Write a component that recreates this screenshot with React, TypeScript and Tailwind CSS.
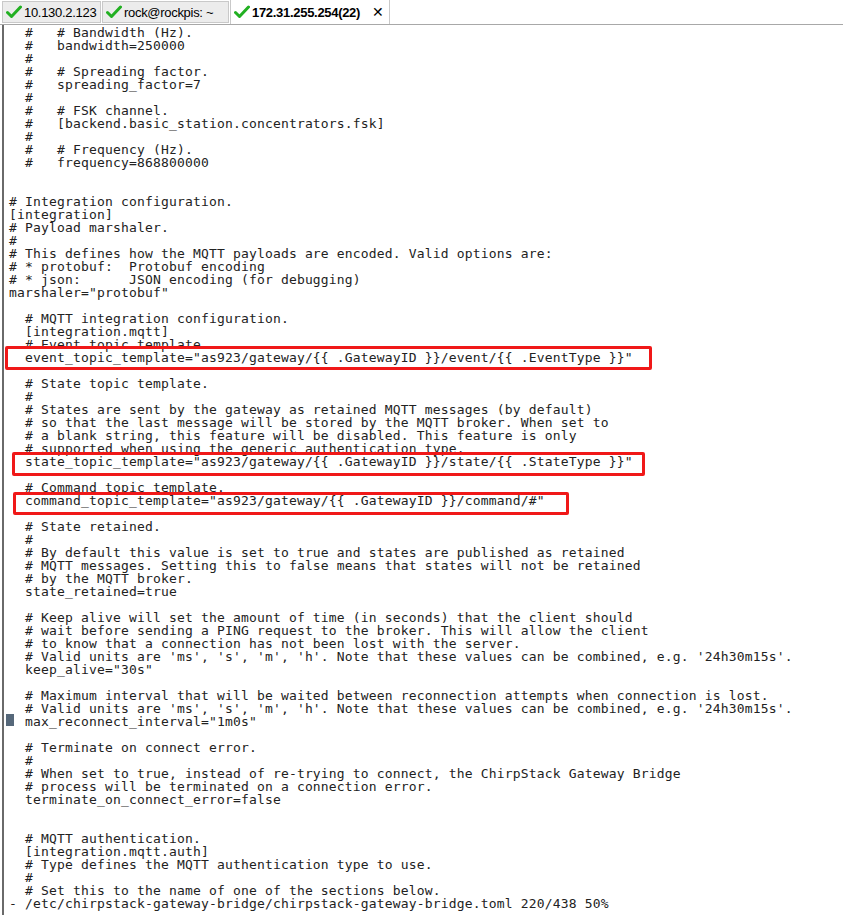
const lines: string[] = [
  "  #   # Bandwidth (Hz).",
  "  #   bandwidth=250000",
  "  #",
  "  #   # Spreading factor.",
  "  #   spreading_factor=7",
  "  #",
  "  #   # FSK channel.",
  "  #   [backend.basic_station.concentrators.fsk]",
  "  #",
  "  #   # Frequency (Hz).",
  "  #   frequency=868800000",
  "",
  "",
  "# Integration configuration.",
  "[integration]",
  "# Payload marshaler.",
  "#",
  "# This defines how the MQTT payloads are encoded. Valid options are:",
  "# * protobuf:  Protobuf encoding",
  "# * json:      JSON encoding (for debugging)",
  'marshaler="protobuf"',
  "",
  "  # MQTT integration configuration.",
  "  [integration.mqtt]",
  "  # Event topic template.",
  '  event_topic_template="as923/gateway/{{ .GatewayID }}/event/{{ .EventType }}"',
  "",
  "  # State topic template.",
  "  #",
  "  # States are sent by the gateway as retained MQTT messages (by default)",
  "  # so that the last message will be stored by the MQTT broker. When set to",
  "  # a blank string, this feature will be disabled. This feature is only",
  "  # supported when using the generic authentication type.",
  '  state_topic_template="as923/gateway/{{ .GatewayID }}/state/{{ .StateType }}"',
  "",
  "  # Command topic template.",
  '  command_topic_template="as923/gateway/{{ .GatewayID }}/command/#"',
  "",
  "  # State retained.",
  "  #",
  "  # By default this value is set to true and states are published as retained",
  "  # MQTT messages. Setting this to false means that states will not be retained",
  "  # by the MQTT broker.",
  "  state_retained=true",
  "",
  "  # Keep alive will set the amount of time (in seconds) that the client should",
  "  # wait before sending a PING request to the broker. This will allow the client",
  "  # to know that a connection has not been lost with the server.",
  "  # Valid units are 'ms', 's', 'm', 'h'. Note that these values can be combined, e.g. '24h30m15s'.",
  '  keep_alive="30s"',
  "",
  "  # Maximum interval that will be waited between reconnection attempts when connection is lost.",
  "  # Valid units are 'ms', 's', 'm', 'h'. Note that these values can be combined, e.g. '24h30m15s'.",
  '  max_reconnect_interval="1m0s"',
  "",
  "  # Terminate on connect error.",
  "  #",
  "  # When set to true, instead of re-trying to connect, the ChirpStack Gateway Bridge",
  "  # process will be terminated on a connection error.",
  "  terminate_on_connect_error=false",
  "",
  "",
  "  # MQTT authentication.",
  "  [integration.mqtt.auth]",
  "  # Type defines the MQTT authentication type to use.",
  "  #",
  "  # Set this to the name of one of the sections below.",
  "- /etc/chirpstack-gateway-bridge/chirpstack-gateway-bridge.toml 220/438 50%",
];

const Check = () => (
  <svg width="16" height="14" viewBox="0 0 16 14" className="shrink-0">
    <path d="M1.5 7.5 L5.5 11.5 L14.5 2" fill="none" stroke="#22b022" strokeWidth="3" strokeLinecap="round" strokeLinejoin="round" />
  </svg>
);

const Tab = ({ label, width, active }: { label: string; width: string; active?: boolean }) => (
  <div
    className={`flex items-center gap-[2px] border border-[#c9c9c9] pl-[3px] overflow-hidden whitespace-nowrap ${width} ${
      active ? "h-[25px] bg-white border-b-0 font-bold" : "h-[22px] bg-[#ececec] mb-[1px]"
    }`}
  >
    <Check />
    <span className="text-[13px] text-black leading-none tracking-[-0.3px]">{label}</span>
    {active && <span className="ml-auto mr-[5px] text-[14px] font-normal leading-none">✕</span>}
  </div>
);

export default function App() {
  return (
    <div className="w-[843px] h-[915px] bg-white overflow-hidden" style={{ fontFamily: "'Liberation Sans', Arial, sans-serif" }}>
      <div className="flex items-end h-[25px] pl-[2px] gap-[1px] border-b border-[#a8a8a8]">
        <Tab label="10.130.2.123" width="w-[99px]" />
        <Tab label="rock@rockpis: ~" width="w-[127px]" />
        <Tab label="172.31.255.254(22)" width="w-[160px]" active />
      </div>
      <div className="relative ml-[2px] border-l-2 border-[#6a6a6a] h-[890px] pt-[1px] pl-[5px]">
        <pre
          className="text-[13px] tracking-[0.17px] leading-[13px] text-[#222] m-0"
          style={{ fontFamily: "'DejaVu Sans Mono', 'Liberation Mono', monospace" }}
        >
          {lines.map((l, i) => (
            <div key={i} className="h-[13px] whitespace-pre">
              {l || " "}
            </div>
          ))}
        </pre>
        <div className="absolute left-[2px] top-[689px] w-[8px] h-[12px] bg-[#56687a]" />
        <div className="absolute left-[1px] top-[321px] w-[647px] h-[24px] border-[3px] border-[#f01818] rounded-[2px]" />
        <div className="absolute left-[8px] top-[427px] w-[633px] h-[24px] border-[3px] border-[#f01818] rounded-[2px]" />
        <div className="absolute left-[9px] top-[467px] w-[556px] h-[23px] border-[3px] border-[#f01818] rounded-[2px]" />
      </div>
    </div>
  );
}
